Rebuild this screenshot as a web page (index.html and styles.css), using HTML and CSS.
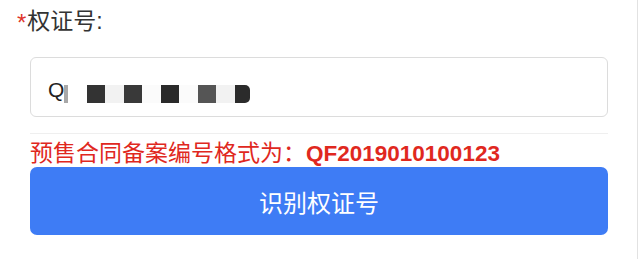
FILE: index.html
```html
<!DOCTYPE html>
<html lang="zh">
<head>
<meta charset="utf-8">
<title>权证号</title>
<link rel="stylesheet" href="styles.css">
</head>
<body>
<div class="page">
  <div class="label"><span class="req">*</span>权证号:</div>
  <div class="field">
    <span class="q">Q</span>
    <span class="mosaic">
      <span class="tick"></span>
      <span class="blk b1"></span>
      <span class="gap lt"></span>
      <span class="blk b2"></span>
      <span class="gap"></span>
      <span class="blk b3"></span>
      <span class="gap"></span>
      <span class="blk b4"></span>
      <span class="gap lt"></span>
      <span class="blk b5"></span>
    </span>
  </div>
  <div class="divider"></div>
  <div class="hint">预售合同备案编号格式为：<span class="code">QF2019010100123</span></div>
  <button class="btn">识别权证号</button>
</div>
</body>
</html>
```

FILE: styles.css
```css
html, body {
  margin: 0;
  padding: 0;
  background: #ffffff;
}
body {
  font-family: "Liberation Sans", "Noto Sans CJK SC", sans-serif;
}
.page {
  width: 638px;
  height: 259px;
  border-right: 1px solid #e2e2e2;
  display: flex;
  flex-direction: column;
  box-sizing: border-box;
}
.label {
  height: 42px;
  line-height: 42px;
  padding-left: 17px;
  font-size: 23px;
  color: #333333;
}
.req {
  color: #e0352b;
  font-size: 24px;
  margin-right: 1px;
  vertical-align: top;
  position: relative;
  top: 2px;
}
.field {
  margin: 15px 29px 0 30px;
  height: 60px;
  box-sizing: border-box;
  border: 1px solid #dcdcdc;
  border-radius: 6px;
  display: flex;
  align-items: flex-start;
  padding: 21px 0 0 17px;
}
.q {
  font-size: 21px;
  line-height: 21px;
  color: #222;
}
.mosaic {
  display: flex;
  height: 18px;
  margin-top: 6px;
}
.tick {
  width: 4px;
  height: 18px;
  background: #a8a8a8;
  margin-right: 19px;
}
.blk {
  flex: none;
  height: 18px;
  width: 18px;
  background: #333;
}
.gap {
  width: 19px;
  height: 18px;
  background: #fbfbfb;
}
.gap.lt { background: #f2f2f2; }
.b2 { background: #393939; }
.b3 { background: #2a2a2a; }
.b4 { background: #555555; }
.b5 {
  width: 15px;
  background: #2b2b2b;
  border-radius: 0 5px 5px 0;
}
.divider {
  margin: 16px 29px 0 30px;
  height: 1px;
  background: #efefef;
}
.hint {
  margin: 5px 0 0 30px;
  height: 24px;
  line-height: 24px;
  font-size: 23px;
  color: #e0281e;
  white-space: nowrap;
  font-family: "Noto Sans CJK SC", sans-serif;
}
.code {
  font-family: "Liberation Sans", sans-serif;
  font-weight: bold;
  font-size: 22.5px;
}
.btn {
  margin: 4px 29px 0 30px;
  height: 68px;
  border: none;
  border-radius: 7px;
  background: #3e7cf5;
  color: #ffffff;
  font-family: "Noto Sans CJK SC", sans-serif;
  font-size: 24px;
  padding: 0;
}
```
